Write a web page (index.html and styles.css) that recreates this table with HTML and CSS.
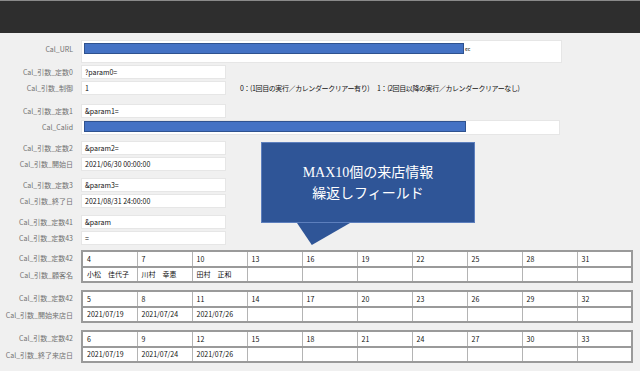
FILE: index.html
```html
<!DOCTYPE html>
<html lang="ja">
<head>
  <meta charset="UTF-8" />
  <title>Cal 設定</title>
  <link rel="stylesheet" href="styles.css">
</head>
<body>

  <header class="topbar"></header>

  <div class="main">
    <div class="group">
      <div class="row row-tall">
        <span class="lbl">Cal_URL</span>
        <div class="field wide tall"><span class="bar"></span><span class="ec">ec</span></div>
      </div>
      <div class="row">
        <span class="lbl">Cal_引数_定数0</span>
        <div class="field">?param0=</div>
      </div>
      <div class="row">
        <span class="lbl">Cal_引数_制御</span>
        <div class="field">1</div>
        <span class="note">0：(1回目の実行／カレンダークリアー有り)　 1：(2回目以降の実行／カレンダークリアーなし)</span>
      </div>
    </div>

    <div class="group g2">
      <div class="row">
        <span class="lbl">Cal_引数_定数1</span>
        <div class="field">&amp;param1=</div>
      </div>
      <div class="row">
        <span class="lbl">Cal_Calid</span>
        <div class="field wide calid"><span class="bar long"></span></div>
      </div>
    </div>

    <div class="group">
      <div class="row">
        <span class="lbl">Cal_引数_定数2</span>
        <div class="field">&amp;param2=</div>
      </div>
      <div class="row">
        <span class="lbl">Cal_引数_開始日</span>
        <div class="field">2021/06/30 00:00:00</div>
      </div>
    </div>

    <div class="group">
      <div class="row">
        <span class="lbl">Cal_引数_定数3</span>
        <div class="field">&amp;param3=</div>
      </div>
      <div class="row">
        <span class="lbl">Cal_引数_終了日</span>
        <div class="field">2021/08/31 24:00:00</div>
      </div>
    </div>

    <div class="group">
      <div class="row">
        <span class="lbl">Cal_引数_定数41</span>
        <div class="field">&amp;param</div>
      </div>
      <div class="row">
        <span class="lbl">Cal_引数_定数43</span>
        <div class="field">=</div>
      </div>
    </div>

    <div class="tgroup t1">
      <div class="tlabels">
        <span>Cal_引数_定数42</span>
        <span>Cal_引数_顧客名</span>
      </div>
      <table class="grid">
        <tr><td>4</td><td>7</td><td>10</td><td>13</td><td>16</td><td>19</td><td>22</td><td>25</td><td>28</td><td>31</td></tr>
        <tr><td>小松　佳代子</td><td>川村　幸恵</td><td>田村　正和</td><td></td><td></td><td></td><td></td><td></td><td></td><td></td></tr>
      </table>
    </div>

    <div class="tgroup">
      <div class="tlabels">
        <span>Cal_引数_定数42</span>
        <span>Cal_引数_開始来店日</span>
      </div>
      <table class="grid">
        <tr><td>5</td><td>8</td><td>11</td><td>14</td><td>17</td><td>20</td><td>23</td><td>26</td><td>29</td><td>32</td></tr>
        <tr><td>2021/07/19</td><td>2021/07/24</td><td>2021/07/26</td><td></td><td></td><td></td><td></td><td></td><td></td><td></td></tr>
      </table>
    </div>

    <div class="tgroup">
      <div class="tlabels">
        <span>Cal_引数_定数42</span>
        <span>Cal_引数_終了来店日</span>
      </div>
      <table class="grid">
        <tr><td>6</td><td>9</td><td>12</td><td>15</td><td>18</td><td>21</td><td>24</td><td>27</td><td>30</td><td>33</td></tr>
        <tr><td>2021/07/19</td><td>2021/07/24</td><td>2021/07/26</td><td></td><td></td><td></td><td></td><td></td><td></td><td></td></tr>
      </table>
    </div>

    <div class="callout">
      <p>MAX10個の来店情報</p>
      <p>繰返しフィールド</p>
    </div>
  </div>

</body>
</html>
```

FILE: styles.css
```css
body {
  margin: 0;
  width: 640px;
  height: 371px;
  overflow: hidden;
  background: #f0f0f0;
  font-family: "Noto Sans CJK JP", "Noto Sans", sans-serif;
  font-size: 7px;
  color: #111;
}
.topbar {
  height: 32px;
  background: #2e2e2e;
  border-top: 1px solid #8a8a8a;
}
.main {
  position: relative;
  padding-top: 7px;
}
.group {
  display: flex;
  flex-direction: column;
  gap: 2px;
  margin-top: 7px;
}
.group:first-child {
  margin-top: 0;
}
.group.g2 {
  margin-top: 9px;
}
.row {
  display: flex;
  align-items: center;
  gap: 8px;
  height: 14px;
}
.row-tall {
  height: 23px;
  align-items: flex-start;
}
.row-tall .lbl {
  padding-top: 4px;
}
.lbl {
  width: 73px;
  flex-shrink: 0;
  text-align: right;
  color: #707070;
  white-space: nowrap;
}
.field {
  box-sizing: border-box;
  width: 145px;
  height: 14px;
  background: #fff;
  border: 1px solid #e6e6e6;
  display: flex;
  align-items: center;
  padding-left: 3px;
  white-space: nowrap;
}
.field.wide {
  width: 481px;
  padding-left: 2px;
  align-items: flex-start;
}
.field.tall {
  height: 23px;
  padding-top: 2px;
}
.field.calid {
  height: 15px;
  width: 479px;
}
.bar {
  display: block;
  box-sizing: border-box;
  width: 380px;
  height: 11px;
  background: #4472c4;
  border: 1px solid #2f528f;
}
.bar.long {
  width: 382px;
}
.ec {
  font-size: 5px;
  margin-left: 1px;
  margin-top: 2px;
}
.note {
  margin-left: 6px;
  white-space: nowrap;
  letter-spacing: -0.4px;
}
.tgroup {
  display: flex;
  gap: 8px;
  margin-top: 7px;
}
.tgroup.t1 {
  margin-top: 5px;
}
.tlabels {
  width: 73px;
  flex-shrink: 0;
  display: flex;
  flex-direction: column;
  text-align: right;
  color: #707070;
  white-space: nowrap;
}
.tlabels span {
  height: 16.5px;
  line-height: 16.5px;
}
.grid {
  width: 552px;
  border-collapse: collapse;
  table-layout: fixed;
  background: #fff;
}
.grid td {
  height: 13px;
  padding: 0 0 0 4px;
  border-left: 1px solid #b4b4b4;
  border-right: 1px solid #b4b4b4;
  border-top: 2px solid #9a9a9a;
  border-bottom: 2px solid #9a9a9a;
  white-space: nowrap;
  overflow: hidden;
}
.grid tr + tr td {
  border-top: 2px solid #7c7c7c;
}
.grid td:first-child {
  border-left: 2px solid #9a9a9a;
}
.grid td:last-child {
  border-right: 2px solid #9a9a9a;
}
.callout {
  position: absolute;
  left: 261px;
  top: 109px;
  width: 214px;
  height: 81px;
  box-sizing: border-box;
  background: #2f5597;
  border: 1px solid #5d7fbd;
  color: #fff;
  text-align: center;
  font-family: "Liberation Serif", "Noto Sans CJK JP", serif;
  font-size: 14px;
  line-height: 21px;
  padding-top: 19px;
}
.callout p {
  margin: 0;
}
.callout::after {
  content: "";
  position: absolute;
  left: 35px;
  top: 80px;
  width: 53px;
  height: 22px;
  background: #2f5597;
  clip-path: polygon(0 0, 100% 0, 28% 100%);
}
```
